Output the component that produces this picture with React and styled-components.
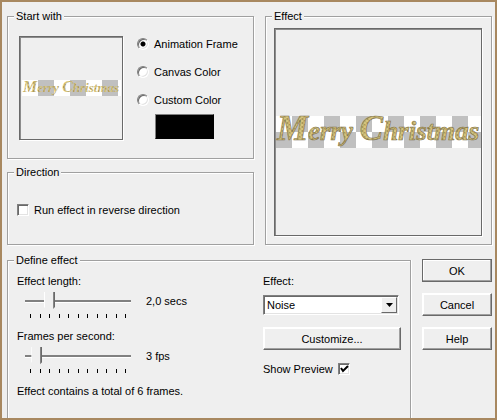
import React, { useState } from 'react';
import styled, { createGlobalStyle, css } from 'styled-components';

const GlobalStyle = createGlobalStyle`
  * {
    box-sizing: border-box;
  }

  body {
    margin: 0;
    background: #efefef;
  }

  body, button, select, input {
    font-family: "Liberation Sans", Arial, sans-serif;
    font-size: 11px;
    line-height: 16px;
    color: #000;
  }
`;

const sunken = css`
  border: 1px solid;
  border-color: #808080 #fff #fff #808080;
  box-shadow: inset 1px 1px #696969, inset -1px -1px #e3e3e3;
`;

const Dialog = styled.form`
  display: flex;
  flex-direction: column;
  gap: 8px;
  min-height: 100vh;
  padding: 7px 3px 0 5px;
  border: 2px solid #a88860;
  background: #efefef;
`;

const Top = styled.div`
  display: grid;
  grid-template-columns: 247fr 227fr;
  gap: 11px;
`;

const Bottom = styled.div`
  display: grid;
  grid-template-columns: 1fr 70px;
  gap: 11px;
  flex: 1;
`;

const Column = styled.div`
  display: flex;
  flex-direction: column;
  gap: 6px;
`;

const Group = styled.fieldset`
  min-width: 0;
  margin: 0;
  padding: ${(props) => props.$padding};
  border: 1px solid #a0a0a0;
  border-bottom-width: ${(props) => (props.$open ? '0' : '1px')};
  box-shadow: 1px ${(props) => (props.$open ? '0' : '1px')} #fff, inset 1px 1px #fff;
`;

const Legend = styled.legend`
  height: 14px;
  margin-left: ${(props) => props.$indent || '-3px'};
  padding: 0 2px;
  line-height: 14px;
  background: #efefef;
`;

const StartRow = styled.div`
  display: flex;
  gap: 14px;
`;

const Preview = styled.div`
  display: flex;
  flex: none;
  align-items: center;
  justify-content: center;
  width: ${(props) => props.$width};
  aspect-ratio: 1;
  border: 1px solid #696969;
  box-shadow: inset 1px 1px #8c8c8c, 1px 1px #fff;

  svg {
    display: block;
    overflow: visible;
  }
`;

const Options = styled.div`
  display: flex;
  flex-direction: column;
  gap: 12px;
`;

const Option = styled.label`
  display: flex;
  align-items: center;
  gap: 5px;
  height: 16px;
  white-space: nowrap;
`;

const Radio = styled.input`
  appearance: none;
  width: 12px;
  height: 12px;
  margin: 0;
  border-radius: 50%;
  background: #fff;
  ${sunken}

  &:checked {
    background: radial-gradient(circle, #000 2px, #fff 3px);
  }
`;

const Swatch = styled.button`
  width: 59px;
  height: 25px;
  margin: -6px 0 0 18px;
  padding: 0;
  border: 1px solid;
  border-color: #808080 #000 #000 #808080;
  background: #000;
`;

const CheckBox = styled.span`
  display: inline-grid;
  width: 12px;
  height: 12px;

  > * {
    grid-area: 1 / 1;
  }

  svg {
    visibility: hidden;
    pointer-events: none;
  }

  input:checked + svg {
    visibility: visible;
  }
`;

const CheckInput = styled.input`
  appearance: none;
  width: 12px;
  height: 12px;
  margin: 0;
  background: #fff;
  ${sunken}
`;

const EffectForm = styled.div`
  display: grid;
  grid-template-columns: 246fr 138fr;
`;

const Line = styled.label`
  display: block;
  height: 16px;
`;

const SliderRow = styled.div`
  display: grid;
  grid-template-columns: 106px 1fr;
  gap: 15px;
  height: 39px;
  padding: 3px 0 0 8px;
`;

const Slider = styled.input`
  appearance: none;
  display: block;
  width: 100%;
  height: 20px;
  margin: 0;
  background: linear-gradient(#808080, #808080) 0 8px / 100% 2px no-repeat,
    linear-gradient(#fff, #fff) 0 10px / 100% 1px no-repeat;

  &::-webkit-slider-thumb {
    appearance: none;
    width: 11px;
    height: 20px;
    background: linear-gradient(to right, #fff 1px, #efefef 1px, #efefef 9px, #a0a0a0 9px, #696969 10px);
    clip-path: polygon(0 0, 100% 0, 100% 15px, 6px 100%, 5px 100%, 0 15px);
  }
`;

const Ticks = styled.div`
  display: flex;
  justify-content: space-between;
  padding: 2px 5px 0;

  i {
    width: 1px;
    height: 4px;
    background: #000;
  }
`;

const Value = styled.output`
  padding-top: 1px;
`;

const Settings = styled.div`
  display: flex;
  flex-direction: column;
`;

const SelectBox = styled.div`
  position: relative;
  height: 20px;
  margin: 6px 2px 12px 0;
`;

const Select = styled.select`
  appearance: none;
  width: 100%;
  height: 20px;
  padding: 0 20px 0 3px;
  border-radius: 0;
  background: #fff;
  ${sunken}
`;

const Arrow = styled.span`
  position: absolute;
  top: 2px;
  right: 2px;
  display: flex;
  align-items: center;
  justify-content: center;
  width: 16px;
  height: 16px;
  border: 1px solid;
  border-color: #fff #696969 #696969 #fff;
  background: #efefef;
  pointer-events: none;
`;

const Button = styled.button`
  width: 100%;
  height: 23px;
  padding: 0;
  border: 1px solid;
  border-color: ${(props) => (props.$primary ? '#696969' : '#fff #696969 #696969 #fff')};
  background: #efefef;
  box-shadow: inset -1px -1px #a0a0a0, inset 1px 1px #fff;
`;

const PreviewToggle = styled.label`
  display: flex;
  align-items: center;
  gap: 5px;
  height: 16px;
  margin-top: 11px;
`;

const Actions = styled.div`
  display: flex;
  flex-direction: column;
  gap: 11px;
  padding-top: 6px;
`;

const Greeting = ({ id, width, height, cap, size, base }) => (
  <svg width={width} height={height} role="img" aria-label="Merry Christmas">
    <defs>
      <pattern id={id} width="32" height="32" patternUnits="userSpaceOnUse">
        <rect width="32" height="32" fill="#fff" />
        <path d="M16 0h16v16H16zM0 16h16v16H0z" fill="#c0c0c0" />
      </pattern>
      <pattern id={`${id}-gold`} width="5" height="4" patternUnits="userSpaceOnUse">
        <rect width="5" height="4" fill="#c3b06c" />
        <path d="M0 1h2M3 3h2" stroke="#e6d68e" />
        <path d="M3 0h1M1 3h1" stroke="#94804a" />
      </pattern>
    </defs>
    <rect width={width} height={height} fill={`url(#${id})`} />
    <text
      x="1"
      y={base}
      fontFamily="Liberation Serif, serif"
      fontStyle="italic"
      fontWeight="bold"
      fontSize={size}
      fill={`url(#${id}-gold)`}
      stroke="#7d7048"
      strokeWidth={size > 20 ? 0.6 : 0}
    >
      <tspan fontSize={cap}>M</tspan>erry <tspan fontSize={cap}>C</tspan>hristmas
    </text>
  </svg>
);

const Check = (props) => (
  <CheckBox>
    <CheckInput type="checkbox" {...props} />
    <svg width="12" height="12" viewBox="0 0 12 12" fill="none" stroke="#000" strokeWidth="2">
      <path d="M3 5l2 3 5-5" />
    </svg>
  </CheckBox>
);

const TickMarks = () => (
  <Ticks>
    {Array.from({ length: 11 }, (_, i) => (
      <i key={i} />
    ))}
  </Ticks>
);

const sources = ['Animation Frame', 'Canvas Color', 'Custom Color'];

const App = () => {
  const [source, setSource] = useState(sources[0]);
  const [length, setLength] = useState(2);
  const [fps, setFps] = useState(3);

  return (
    <>
      <GlobalStyle />
      <Dialog onSubmit={(e) => e.preventDefault()}>
        <Top>
          <Column>
            <Group $padding="13px 11px 18px">
              <Legend $indent="-5px">Start with</Legend>
              <StartRow>
                <Preview $width="104px">
                  <Greeting id="small" width={99} height={16} cap={16} size={13} base={12} />
                </Preview>
                <Options>
                  {sources.map((name) => (
                    <Option key={name}>
                      <Radio
                        type="radio"
                        name="source"
                        checked={source === name}
                        onChange={() => setSource(name)}
                      />
                      {name}
                    </Option>
                  ))}
                  <Swatch type="button" aria-label="Pick custom color" />
                </Options>
              </StartRow>
            </Group>
            <Group $padding="23px 9px 26px">
              <Legend>Direction</Legend>
              <Option>
                <Check />
                Run effect in reverse direction
              </Option>
            </Group>
          </Column>
          <Group $padding="5px 9px 8px 8px">
            <Legend $indent="-2px">Effect</Legend>
            <Preview $width="100%">
              <Greeting id="large" width={205} height={32} cap={35} size={27} base={24} />
            </Preview>
          </Group>
        </Top>
        <Bottom>
          <Group $padding="6px 9px 0" $open>
            <Legend>Define effect</Legend>
            <EffectForm>
              <div>
                <Line htmlFor="length">Effect length:</Line>
                <SliderRow>
                  <div>
                    <Slider
                      id="length"
                      type="range"
                      min="0"
                      max="10"
                      step="0.1"
                      value={length}
                      onChange={(e) => setLength(Number(e.target.value))}
                    />
                    <TickMarks />
                  </div>
                  <Value htmlFor="length">{length.toFixed(1).replace('.', ',')} secs</Value>
                </SliderRow>
                <Line htmlFor="fps">Frames per second:</Line>
                <SliderRow>
                  <div>
                    <Slider
                      id="fps"
                      type="range"
                      min="1"
                      max="31"
                      value={fps}
                      onChange={(e) => setFps(Number(e.target.value))}
                    />
                    <TickMarks />
                  </div>
                  <Value htmlFor="fps">{fps} fps</Value>
                </SliderRow>
                <Line as="div">Effect contains a total of {Math.round(length * fps)} frames.</Line>
              </div>
              <Settings>
                <Line htmlFor="effect">Effect:</Line>
                <SelectBox>
                  <Select id="effect" defaultValue="Noise">
                    <option>Noise</option>
                  </Select>
                  <Arrow>
                    <svg width="7" height="4" viewBox="0 0 7 4">
                      <path d="M0 0h7L3.500 4z" />
                    </svg>
                  </Arrow>
                </SelectBox>
                <Button type="button">Customize...</Button>
                <PreviewToggle>
                  Show Preview
                  <Check defaultChecked />
                </PreviewToggle>
              </Settings>
            </EffectForm>
          </Group>
          <Actions>
            <Button type="submit" $primary>OK</Button>
            <Button type="button">Cancel</Button>
            <Button type="button">Help</Button>
          </Actions>
        </Bottom>
      </Dialog>
    </>
  );
};

export default App;
